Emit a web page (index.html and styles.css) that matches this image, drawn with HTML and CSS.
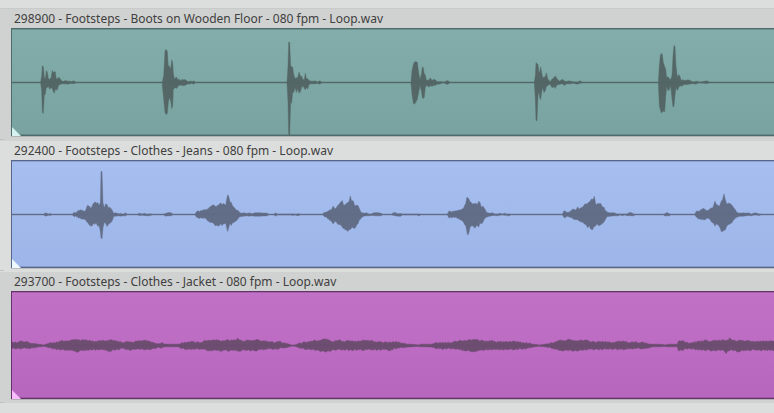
FILE: index.html
```
<!DOCTYPE html>
<html lang="en">
    <head>
        <meta charset="utf-8">
        <title>Footsteps</title>
        <link rel="stylesheet" href="styles.css">
    </head>
    <body>
        <main class="timeline">
            <section class="track">
                <h2 class="clip-name">298900 - Footsteps - Boots on Wooden Floor - 080 fpm - Loop.wav</h2>
                <div class="clip teal">
                    <svg class="wave" id="boots" aria-hidden="true"></svg>
                    <span class="fade"></span>
                </div>
            </section>
            <section class="track light">
                <h2 class="clip-name">292400 - Footsteps - Clothes - Jeans - 080 fpm - Loop.wav</h2>
                <div class="clip blue">
                    <svg class="wave" id="jeans" aria-hidden="true"></svg>
                    <span class="fade"></span>
                </div>
            </section>
            <section class="track">
                <h2 class="clip-name">293700 - Footsteps - Clothes - Jacket - 080 fpm - Loop.wav</h2>
                <div class="clip purple">
                    <svg class="wave" id="jacket" aria-hidden="true"></svg>
                    <span class="fade"></span>
                </div>
            </section>
        </main>
        <script src="waves.js"></script>
    </body>
</html>
```
FILE: styles.css
```
body {
    margin: 0;
    background: #dcdedd;
    font-family: "Noto Sans", "Open Sans", sans-serif;
}
.timeline {
    padding-top: 8px;
    overflow: hidden;
}
.track {
    padding: 1px 0 4px 11px;
    border-top: 1px solid #c9cbca;
    background: linear-gradient(#bfc1c0, #bfc1c0) 0 100% / 4px 1px no-repeat #d0d2d1;
}
.track.light {
    padding-bottom: 3px;
    border-top-color: #d0d2d1;
    background-color: #dcdedd;
}
.track.light + .track {
    border-top-color: #dcdedd;
}
.clip-name {
    margin: 0;
    padding-left: 3px;
    color: #404040;
    font-size: 12px;
    font-weight: normal;
    line-height: 18px;
    white-space: nowrap;
}
.clip {
    position: relative;
    border: 1px solid;
    border-right: 0;
    box-shadow: inset 0 1px rgba(0, 0, 0, 0.15), inset 0 -1px rgba(0, 0, 0, 0.15), 0 1px rgba(0, 0, 0, 0.15);
}
.teal {
    border-color: #4f6b69;
    background: linear-gradient(#83adab, #78a3a1);
    color: #546766;
}
.blue {
    border-color: #56658c;
    background: linear-gradient(#a6bff0, #9db5e8);
    color: #626d87;
}
.purple {
    border-color: #65306b;
    background: linear-gradient(#c172c7, #b766bd);
    color: #6d4d70;
}
.wave {
    display: block;
    width: 100%;
    height: 106px;
    fill: currentColor;
    stroke: currentColor;
    stroke-width: 0.4;
}
.fade {
    position: absolute;
    left: 0;
    bottom: -1px;
    width: 9px;
    height: 9px;
    background: #d5f1f0;
    clip-path: polygon(0 0, 100% 100%, 0 100%);
}
.blue .fade {
    background: #eef8ff;
}
.purple .fade {
    background: #fbbcff;
}
```
FILE: waves.js
```
// each peak is: position, height above the line, depth below it (3 units = 1px)
var boots = [
    [-36, "122,2,3 125,20,25 127,50,90 130,48,92 133,15,38 136,12,35 139,36,15 142,30,15 145,12,12 149,10,20 153,14,16 157,36,18 160,30,28 163,32,32 166,32,20 169,10,22 172,12,22 176,16,8 180,12,6 185,5,4 190,3,4 196,6,4 202,4,5 208,4,4 213,2,2 220,5,4 226,2,2"],
    [-36, "487,2,10 491,20,50 495,95,90 498,99,96 502,94,93 505,48,60 508,50,45 512,40,55 515,68,78 518,60,72 520,30,20 523,10,18 526,14,15 530,16,18 534,8,12 538,10,8 542,5,8 546,9,8 550,8,10 554,9,8 558,7,8 562,4,4 568,2,5 572,5,3 576,2,2 581,5,5 585,2,2"],
    [729, "96,2,2 99,50,60 101,121,156 104,121,158 107,50,60 110,48,62 113,46,30 116,25,30 120,12,15 124,14,30 128,15,18 132,31,32 136,20,28 140,18,15 144,8,10 148,10,18 151,28,22 154,12,14 158,12,20 162,6,6 168,4,4 175,4,4 182,5,4 187,1,2 194,5,5 199,2,2"],
    [729, "468,2,2 471,35,35 475,55,62 479,62,65 483,62,58 487,61,50 491,30,30 495,8,10 499,25,25 502,47,46 505,44,48 508,25,44 511,23,15 514,8,10 518,6,10 522,8,14 526,14,9 531,6,12 536,9,8 541,8,9 546,3,5 552,2,5 558,3,3 565,1,1 578,6,6 583,2,2"],
    [1506, "61,2,2 64,20,50 66,59,115 69,57,114 72,54,40 75,30,28 77,32,45 80,47,51 83,30,30 86,15,15 90,16,30 94,18,25 97,29,12 101,12,10 105,6,6 109,3,6 113,9,14 117,12,15 121,16,12 124,20,18 128,13,8 132,8,7 137,4,6 142,8,4 147,9,5 152,4,9 157,3,4 163,5,4 170,4,4 177,2,2 190,1,5 199,5,2 204,1,1"],
    [1506, "433,2,2 436,50,70 439,82,82 442,88,92 445,84,87 448,60,86 452,48,88 455,40,45 458,15,12 462,17,25 466,12,22 470,8,10 474,22,50 477,80,74 480,111,70 483,108,40 486,50,14 490,15,24 494,24,16 498,18,8 502,5,12 506,9,9 511,6,6 517,7,7 522,8,5 528,6,5 534,3,3 540,1,4 546,4,5 552,3,1 558,1,1 578,5,3 584,2,2"]
];
var jeans = [
    [-36, "130,1,1 138,5,5 145,1,2 151,3,3 155,1,1"],
    [-36, "218,1,2 221,6,5 230,7,7 238,12,10 246,13,13 253,10,14 258,15,18 263,28,24 267,25,30 272,18,34 276,25,35 280,33,26 284,37,30 289,34,26 293,36,35 297,28,33 301,35,50 303,129,70 306,129,73 309,35,40 313,20,24 317,32,26 321,30,36 325,20,30 329,22,26 333,18,24 337,12,18 341,4,6 348,5,5 355,2,4 362,3,5 370,1,4 377,5,4 381,1,1"],
    [-36, "412,1,1 419,4,3 426,1,2 433,4,3 440,1,4 452,2,3 456,1,1"],
    [-36, "491,1,1 497,3,5 505,6,4 514,5,4 518,1,1"],
    [-36, "585,1,1 590,9,9 598,8,12 606,11,10 613,15,10 620,16,15 628,22,22 636,28,24 643,28,30 649,24,33 655,28,35 661,34,28 666,30,34 671,34,28 677,28,25 680,46,40 683,59,51 686,55,40 690,38,27 694,36,33 699,24,24 704,20,22 710,13,18 716,10,10 723,4,6 732,5,5 741,3,4 748,5,5 756,2,4 764,5,5 782,5,5 802,4,4 806,1,1"],
    [729, "57,1,1 62,5,5 67,1,1 109,1,1 113,2,4 118,1,1 126,1,3 131,3,4 135,1,1"],
    [729, "204,2,2 208,7,6 216,9,10 224,14,18 230,16,22 234,25,28 240,17,20 246,24,26 252,30,30 258,38,33 262,42,38 267,26,42 272,30,46 278,36,51 282,38,46 286,56,45 290,40,40 294,42,38 299,27,42 304,28,34 309,27,28 314,16,15 319,6,10 326,4,5 335,5,4 342,1,4 348,1,3 356,5,3 365,6,4 378,4,4 382,1,1"],
    [729, "410,1,1 414,5,2 421,6,4 428,2,5 438,3,5 442,1,1 487,1,1 492,1,5 496,1,1"],
    [729, "577,1,1 581,9,9 589,7,10 597,9,8 605,11,10 613,14,15 620,16,18 627,22,26 632,32,33 635,50,48 638,51,62 641,48,57 645,38,40 650,34,34 655,32,36 661,33,40 666,30,33 671,40,38 675,36,25 680,22,28 685,24,20 690,16,12 695,6,8 704,4,5 713,5,3 720,1,3 728,1,4 734,4,2 742,1,1 748,4,2 756,1,2 762,1,5 766,1,1"],
    [1506, "146,2,2 149,10,8 155,9,9 162,6,6 169,8,9 177,16,12 184,13,15 191,23,16 196,16,20 203,20,23 209,26,26 215,32,30 221,34,40 226,38,34 231,45,44 236,45,45 241,55,37 245,32,34 250,32,28 255,32,34 261,32,31 266,22,26 271,20,20 276,10,12 281,6,6 291,5,5 302,5,4 307,2,4 313,1,4 319,1,1 325,1,4 332,1,1 340,2,4 346,6,3 354,5,4 359,1,4 363,1,1"],
    [1506, "450,1,2 455,4,5 460,6,3 466,2,5 469,1,1"],
    [1506, "543,2,2 547,10,8 555,8,13 563,15,14 570,18,16 577,13,12 584,14,12 591,20,20 597,22,25 603,40,35 607,30,28 612,28,30 617,26,38 622,40,52 626,46,50 630,62,48 634,45,46 638,32,36 643,34,30 648,32,28 654,27,25 659,20,16 664,15,10 669,6,8 678,4,5 688,5,5 696,4,4 704,5,3 712,1,4 718,4,2 725,5,1 736,1,3 740,1,1"]
];
var jacket = [
    [-36, "36,10,9 54,9,9 65,13,9 79,12,9 88,9,9 95,6,7 105,6,7 115,4,4 124,3,4 130,1,2 138,4,4 148,7,7 160,9,10 172,9,12 184,15,13 196,13,13 207,14,15 216,16,13 226,17,17 235,17,20 241,14,15 249,18,15 258,16,15 271,14,12 284,12,13 297,13,13 309,16,12 319,14,15 330,17,17 342,15,13 354,13,12 366,9,9 377,11,11 388,10,14 399,9,11 411,14,11 421,13,11 433,16,12 444,14,13 453,10,12 465,8,8 475,5,5 484,8,7 492,5,4 506,4,4 520,4,4 536,4,4 545,8,9 560,9,11 576,12,11 588,9,10 602,9,10 616,15,13 628,14,16 638,15,14 650,18,15 663,13,16 675,15,14 686,16,17 698,15,14 708,16,15 714,22,17 720,16,17 728,13,13 738,14,14 749,15,15 762,15,15 772,16,14"],
    [729, "0,16,16 14,16,13 28,13,11 42,12,10 56,9,11 65,10,11 72,12,9 80,9,7 90,8,7 99,5,5 106,2,3 114,1,1 122,2,3 130,6,6 142,8,9 153,10,11 165,11,12 180,16,13 191,15,15 202,18,17 213,18,19 224,16,17 235,12,13 245,14,13 256,16,12 266,12,12 278,14,13 290,14,14 302,12,13 314,13,13 325,16,15 337,15,12 350,14,12 362,11,13 374,11,13 386,9,12 400,9,15 410,9,12 422,12,9 434,9,8 445,8,6 456,4,5 470,4,4 485,2,3 492,1,3 496,4,4 515,4,4 530,4,5 540,8,8 553,8,10 565,9,11 577,8,9 589,9,9 602,13,11 613,15,13 625,14,14 639,17,15 652,17,19 663,19,16 675,14,15 686,14,14 698,12,13 710,15,13 722,11,12 734,11,13 746,12,13 759,11,11 777,12,12 782,12,12"],
    [1506, "0,12,12 15,10,10 30,8,10 45,7,8 56,4,5 68,3,3 75,1,2 83,2,3 92,4,4 105,6,6 118,9,9 130,12,12 139,17,14 150,14,16 160,17,14 171,17,15 182,16,16 193,14,16 204,15,14 217,16,13 229,12,11 242,11,12 256,12,13 268,11,11 280,11,10 293,9,11 307,12,11 320,13,12 332,12,11 345,9,10 357,10,11 365,13,9 376,8,9 390,9,8 402,5,8 416,4,4 432,4,4 450,3,3 454,1,3 460,4,4 474,4,4 490,4,4 493,13,16 500,13,13 508,15,15 515,9,9 527,8,10 540,9,10 553,13,14 565,13,13 574,16,16 584,13,13 595,15,16 606,15,15 618,15,14 630,17,15 637,16,24 643,16,16 648,23,14 655,16,14 664,14,14 672,15,20 681,15,16 693,14,14 706,15,15 720,12,12 733,12,15 745,13,14 757,13,13 770,13,15 786,14,14"]
];

function drawWave(id, bursts, rough) {
    var svg = document.getElementById(id);
    var d = "M0 53H4000V54H0Z";
    bursts.forEach(function (burst) {
        var top = [];
        var bottom = [];
        burst[1].split(" ").forEach(function (item, i, all) {
            var p = item.split(",").map(Number);
            var next = (all[i + 1] || item).split(",").map(Number);
            var steps = rough ? Math.max(1, Math.round((next[0] - p[0]) / 3)) : 1;
            for (var s = 0; s < steps; s++) {
                var t = s / steps;
                var x = p[0] + (next[0] - p[0]) * t;
                var up = p[1] + (next[1] - p[1]) * t;
                var down = p[2] + (next[2] - p[2]) * t;
                if (s > 0 && up > 6) {
                    up += Math.sin(x * 7) * rough;
                    down += Math.cos(x * 11) * rough;
                }
                x = ((x + burst[0]) / 3).toFixed(2);
                top.push(x + " " + (53.5 - up / 3).toFixed(2));
                bottom.unshift(x + " " + (53.5 + down / 3).toFixed(2));
            }
        });
        d += "M" + top.concat(bottom).join("L") + "Z";
    });
    var path = document.createElementNS("http://www.w3.org/2000/svg", "path");
    path.setAttribute("d", d);
    svg.appendChild(path);
}

drawWave("boots", boots, 0);
drawWave("jeans", jeans, 2);
drawWave("jacket", jacket, 2);
```
